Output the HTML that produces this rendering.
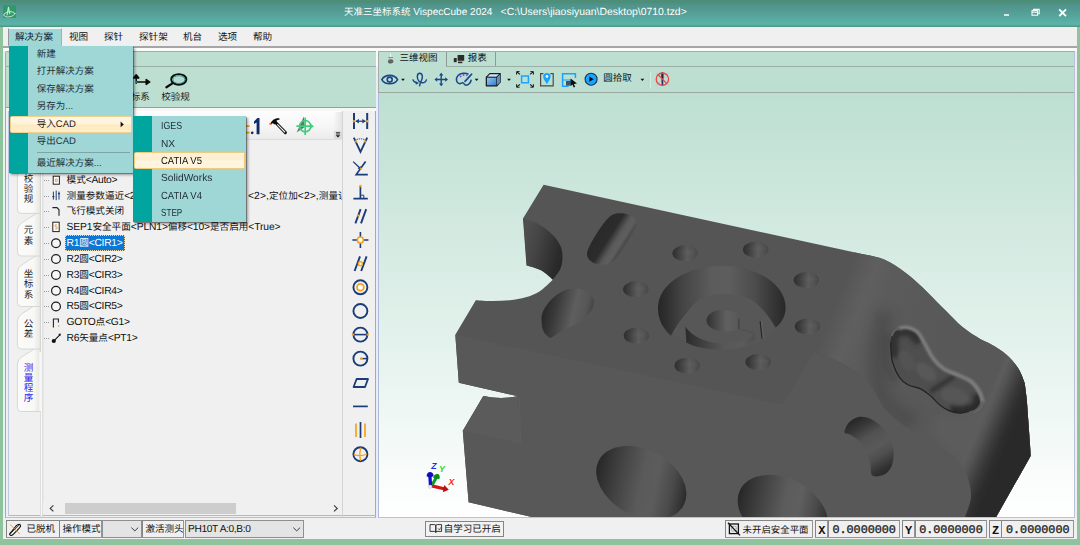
<!DOCTYPE html>
<html lang="zh-CN"><head><meta charset="utf-8"><title>VispecCube 2024</title><style>
html,body{margin:0;padding:0}
html{background:#8fc39d}
body{width:1080px;height:545px;position:relative;overflow:hidden;background:#8fc39d;font-family:"Liberation Sans","Noto Sans CJK SC",sans-serif;font-size:9.5px;color:#000;text-rendering:geometricPrecision}
.a{position:absolute}
.t{white-space:nowrap}
.c{font-size:9.6px;letter-spacing:0}
.v{width:9.6px;font-size:9.6px;text-align:center;white-space:nowrap}
</style></head><body>
<div class="a" style="left:0px;top:0px;width:1080px;height:27px;background:linear-gradient(#4e9272 0,#4b8c7b 5%,#51948b 20%,#55a097 50%,#59afa5 80%,#5cb4a8 90%,#55a78f 94%,#4b957f 100%);"></div><svg class="a" style="left:3px;top:5px" width="14" height="14" viewBox="3 5 14 14"><rect x="3.1" y="5.4" width="12.9" height="12.5" fill="#2e9a67"/><g fill="none" stroke="#e9f7ee" stroke-linecap="round" opacity="0.85"><ellipse cx="9.3" cy="14.3" rx="5.6" ry="2.5" transform="rotate(-9 9.3 14.3)" stroke-width="0.9"/><path d="M7 15 L8.5 7.2 L9.700 13.600" stroke-width="1.100" stroke-linejoin="round"/></g></svg><div class="a t" style="left:344px;top:7px;height:12px;line-height:12px;font-size:10.05px;color:#fff;white-space:pre"><span style="font-size:9.5px">天准三坐标系统</span> VispecCube 2024</div><div class="a t" style="left:500.6px;top:7px;height:12px;line-height:12px;font-size:10.4px;color:#fff;letter-spacing:0.02px;white-space:pre">&lt;C:\Users\jiaosiyuan\Desktop\0710.tzd&gt;</div><svg class="a" style="left:996px;top:4px" width="78" height="18" viewBox="0 0 78 18"><rect x="8" y="10.2" width="5" height="1.6" fill="#f4fbf8"/><g fill="none" stroke="#f4fbf8" stroke-width="1.1"><rect x="36" y="6.6" width="5.6" height="4.6"/><path d="M36 8.2h5.6"/><path d="M37.6 6.4v-1h5.6v4.4h-1.4"/></g><path d="M63.2 5.4 L70 12.2 M70 5.4 L63.2 12.2" stroke="#fff" stroke-width="1.9"/></svg><div class="a" style="left:3px;top:27px;width:1074px;height:512px;background:#f0f0f0;"></div><div class="a" style="left:3px;top:46.4px;width:1074px;height:1.2px;background:#a6a6a6;"></div><div class="a" style="left:3px;top:47.6px;width:1074px;height:3.2px;background:#fbfbfb;"></div><div class="a t" style="left:69px;top:31.5px;height:12px;line-height:12px;font-size:9.6px;color:#111;">视图</div><div class="a t" style="left:104px;top:31.5px;height:12px;line-height:12px;font-size:9.6px;color:#111;">探针</div><div class="a t" style="left:139px;top:31.5px;height:12px;line-height:12px;font-size:9.6px;color:#111;">探针架</div><div class="a t" style="left:183px;top:31.5px;height:12px;line-height:12px;font-size:9.6px;color:#111;">机台</div><div class="a t" style="left:218px;top:31.5px;height:12px;line-height:12px;font-size:9.6px;color:#111;">选项</div><div class="a t" style="left:253px;top:31.5px;height:12px;line-height:12px;font-size:9.6px;color:#111;">帮助</div><div class="a" style="left:3px;top:50.8px;width:2.2px;height:488.2px;background:#e9f1ec;"></div><div class="a" style="left:5.4px;top:51px;width:371px;height:467.4px;border:1px solid #a6aaa8;border-bottom-color:#b4c0e0;border-radius:2px 0 0 0;box-sizing:border-box;background:#f0f0f0;"></div><div class="a" style="left:8.6px;top:514.8px;width:367px;height:1px;background:#b9b9b9;"></div><div class="a" style="left:8px;top:108px;width:1.1px;height:407.6px;background:#bfc8e2;"></div><div class="a" style="left:6.4px;top:52px;width:369.2px;height:55.6px;background:#bddfd2;"></div><div class="a" style="left:6.4px;top:66.2px;width:369.2px;height:1px;background:#9db0a8;"></div><div class="a" style="left:6.4px;top:107px;width:369.2px;height:1.5px;background:#999d9b;"></div><div class="a" style="left:6.4px;top:108.3px;width:369.2px;height:2.8px;background:#f7f7f7;"></div><svg class="a" style="left:118px;top:70px" width="36" height="22" viewBox="118 70 36 22"><path d="M136.2 83.8V75.4M133.6 78 l2.6-3.2 2.6 3.2z M136.2 82h11 M146.2 79.6 l3.6 2.4 -3.6 2.4z" stroke="#0a0a0a" stroke-width="1.5" fill="#0a0a0a" stroke-linejoin="round"/><circle cx="136" cy="82" r="1" fill="#2aa06a"/></svg><div class="a t" style="left:121.2px;top:92.0px;height:12px;line-height:12px;font-size:9.6px;color:#1a1a1a;">坐标系</div><svg class="a" style="left:160px;top:70px" width="34" height="22" viewBox="160 70 34 22"><ellipse cx="178.8" cy="79.4" rx="7.6" ry="5.3" fill="#b2dbd0" stroke="#0c0c0c" stroke-width="1.9"/><ellipse cx="178.8" cy="79.6" rx="6" ry="3.9" fill="none" stroke="#2c8f86" stroke-width="0.9"/><path d="M172.4 83.400 L166.400 87.200" stroke="#0c0c0c" stroke-width="2.300" stroke-linecap="round"/></svg><div class="a t" style="left:161.2px;top:92.0px;height:12px;line-height:12px;font-size:9.6px;color:#1a1a1a;">校验规</div><div class="a" style="left:43px;top:111.3px;width:299.4px;height:28.9px;background:linear-gradient(#fdfdfd 0,#f6f6f6 55%,#ebebeb 100%);border-radius:0 2px 2px 0;border-bottom:1px solid #dcdcdc;box-sizing:border-box;"></div><div class="a" style="left:332.6px;top:111.6px;width:9.8px;height:28.2px;background:linear-gradient(90deg,rgba(235,235,235,0) 0,#e4e4e4 100%);"></div><div class="a" style="left:334px;top:130.6px;width:7.8px;height:8px;background:#d9d9d9;border-radius:1px;"></div><svg class="a" style="left:334px;top:130.6px" width="8" height="8" viewBox="0 0 8 8"><path d="M2 1.6h4M2 3h4" stroke="#222" stroke-width="0.8"/><path d="M1.8 4.2h4.4L4 6.6z" fill="#111"/></svg><svg class="a" style="left:236px;top:112px" width="90" height="28" viewBox="236 112 90 28"><path d="M240 126.2h9.6M244.8 121.6v9M240 132.6h9.6" stroke="#f0a020" stroke-width="1.7"/><circle cx="252.2" cy="132.8" r="1.35" fill="#0e2c69"/><path d="M254 121.6 L257.4 118h2.1v16.2h-2.9v-11.8l-2.6 1.7z" fill="#0e2c69"/><path d="M275.4 122.2 L285.4 132.6" stroke="#0c0c0c" stroke-width="3" stroke-linecap="round"/><path d="M277.6 124.6 L284.8 132" stroke="#f4f4f4" stroke-width="1.1" stroke-linecap="round"/><path d="M270.6 123.6 C271.6 120.4 275.2 117.6 279.6 118.4 L279.4 119.8 C277.2 119.6 275.8 120.8 276.6 122.8 L274.2 124.6 L272.8 123 L271.4 124.6z" fill="#0c0c0c"/><circle cx="270.4" cy="123.8" r="1.1" fill="#ff5a1e"/><path d="M303.8 116.6 L304.8 127 L296.6 132.4z" fill="#6e6e6e"/><g fill="none" stroke="#3fcf7f" stroke-width="1.7"><circle cx="305.2" cy="126.2" r="5.6"/><path d="M305.2 117.6v17.4M296.4 126.2h15"/></g><path d="M310.6 123.8 l3.4 2.4 -3.4 2.4z" fill="#3fcf7f"/></svg><div class="a" style="left:342.4px;top:111.3px;width:1px;height:405.5px;background:#d4d4d4;"></div><svg class="a" style="left:9px;top:160px" width="35" height="360" viewBox="9 160 35 360"><defs><linearGradient id="tg" x1="0" x2="1" y1="0" y2="0"><stop offset="0" stop-color="#fbfbfb"/><stop offset="0.7" stop-color="#f8f8f6"/><stop offset="1" stop-color="#e6e6e2"/></linearGradient></defs><path d="M40.6 160V517" stroke="#dcdcdc" stroke-width="1"/><path d="M41.8 160V517" stroke="#fafafa" stroke-width="1.2"/><path d="M42.8 160V517" stroke="#cfcfcf" stroke-width="0.8"/><path d="M40.4 345 L23 356 Q17.4 359 17.4 364 L17.4 407.5 Q17.4 411.5 21.4 411.5 L40.4 411.5 Z" fill="url(#tg)" stroke="#cfcfcb" stroke-width="0.8"/><path d="M40.4 302 L23 313 Q17.4 316 17.4 321 L17.4 345 Q17.4 349 21.4 349 L40.4 349 Z" fill="url(#tg)" stroke="#cfcfcb" stroke-width="0.8"/><path d="M40.4 253 L23 264 Q17.4 267 17.4 272 L17.4 302.5 Q17.4 306.5 21.4 306.5 L40.4 306.5 Z" fill="url(#tg)" stroke="#cfcfcb" stroke-width="0.8"/><path d="M40.4 211 L23 222 Q17.4 225 17.4 230 L17.4 252 Q17.4 256 21.4 256 L40.4 256 Z" fill="url(#tg)" stroke="#cfcfcb" stroke-width="0.8"/><path d="M40.4 151 L23 162 Q17.4 165 17.4 170 L17.4 209.4 Q17.4 213.4 21.4 213.4 L40.4 213.4 Z" fill="url(#tg)" stroke="#cfcfcb" stroke-width="0.8"/><path d="M40.6 352 V411" stroke="#f6f6f4" stroke-width="2.6"/></svg><div class="a v" style="left:23.8px;top:175.4px;color:#1c1c1c;line-height:9.95px">校<br>验<br>规</div><div class="a v" style="left:23.8px;top:226.4px;color:#1c1c1c;line-height:10.7px">元<br>素</div><div class="a v" style="left:23.8px;top:269.5px;color:#1c1c1c;line-height:10.5px">坐<br>标<br>系</div><div class="a v" style="left:23.8px;top:319.6px;color:#1c1c1c;line-height:10.2px">公<br>差</div><div class="a v" style="left:23.8px;top:363.6px;color:#2a22ee;line-height:10.2px">测<br>量<br>程<br>序</div><div class="a" style="left:43px;top:111.3px;width:299.4px;height:391px;overflow:hidden;"><div class="a" style="left:1.4px;top:68.50000000000001px;width:6px;height:1px;background:repeating-linear-gradient(90deg,#9a9a9a 0 1px,transparent 1px 2px)"></div><div class="a t" style="left:23.6px;top:63.6px;height:12px;line-height:12px;font-size:10.3px;color:#111;letter-spacing:-0.3px;"><span class="c">模式</span>&lt;Auto&gt;</div><div class="a" style="left:1.4px;top:84.39999999999999px;width:6px;height:1px;background:repeating-linear-gradient(90deg,#9a9a9a 0 1px,transparent 1px 2px)"></div><div class="a t" style="left:23.6px;top:79.5px;height:12px;line-height:12px;font-size:10.3px;color:#111;letter-spacing:-0.3px;"><span class="c">测量参数逼近</span>&lt;2&gt;,<span class="c">回退</span>&lt;2&gt;,<span class="c">搜索</span>&lt;2&gt;</div><div class="a" style="left:1.4px;top:99.60000000000001px;width:6px;height:1px;background:repeating-linear-gradient(90deg,#9a9a9a 0 1px,transparent 1px 2px)"></div><div class="a t" style="left:23.6px;top:94.7px;height:12px;line-height:12px;font-size:10.3px;color:#111;letter-spacing:-0.3px;"><span class="c">飞行模式关闭</span></div><div class="a" style="left:1.4px;top:115.50000000000001px;width:6px;height:1px;background:repeating-linear-gradient(90deg,#9a9a9a 0 1px,transparent 1px 2px)"></div><div class="a t" style="left:23.6px;top:110.6px;height:12px;line-height:12px;font-size:10.3px;color:#111;letter-spacing:-0.13px;">SEP1<span class="c">安全平面</span>&lt;PLN1&gt;<span class="c">偏移</span>&lt;10&gt;<span class="c">是否启用</span>&lt;True&gt;</div><div class="a" style="left:1.4px;top:131.8px;width:6px;height:1px;background:repeating-linear-gradient(90deg,#9a9a9a 0 1px,transparent 1px 2px)"></div><div class="a" style="left:21.8px;top:124.20000000000002px;width:60.4px;height:15.6px;background:#0b78d6;outline:1px dotted #e8d9b0;outline-offset:-1px"></div><div class="a t" style="left:23.6px;top:126.9px;height:12px;line-height:12px;font-size:10.3px;color:#fff;letter-spacing:-0.3px;">R1<span class="c">圆</span>&lt;CIR1&gt;</div><div class="a" style="left:1.4px;top:147.3px;width:6px;height:1px;background:repeating-linear-gradient(90deg,#9a9a9a 0 1px,transparent 1px 2px)"></div><div class="a t" style="left:23.6px;top:142.4px;height:12px;line-height:12px;font-size:10.3px;color:#111;letter-spacing:-0.3px;">R2<span class="c">圆</span>&lt;CIR2&gt;</div><div class="a" style="left:1.4px;top:163.8px;width:6px;height:1px;background:repeating-linear-gradient(90deg,#9a9a9a 0 1px,transparent 1px 2px)"></div><div class="a t" style="left:23.6px;top:158.9px;height:12px;line-height:12px;font-size:10.3px;color:#111;letter-spacing:-0.3px;">R3<span class="c">圆</span>&lt;CIR3&gt;</div><div class="a" style="left:1.4px;top:179.8px;width:6px;height:1px;background:repeating-linear-gradient(90deg,#9a9a9a 0 1px,transparent 1px 2px)"></div><div class="a t" style="left:23.6px;top:174.9px;height:12px;line-height:12px;font-size:10.3px;color:#111;letter-spacing:-0.3px;">R4<span class="c">圆</span>&lt;CIR4&gt;</div><div class="a" style="left:1.4px;top:195.0px;width:6px;height:1px;background:repeating-linear-gradient(90deg,#9a9a9a 0 1px,transparent 1px 2px)"></div><div class="a t" style="left:23.6px;top:190.1px;height:12px;line-height:12px;font-size:10.3px;color:#111;letter-spacing:-0.3px;">R5<span class="c">圆</span>&lt;CIR5&gt;</div><div class="a" style="left:1.4px;top:211.09999999999997px;width:6px;height:1px;background:repeating-linear-gradient(90deg,#9a9a9a 0 1px,transparent 1px 2px)"></div><div class="a t" style="left:23.6px;top:206.2px;height:12px;line-height:12px;font-size:10.3px;color:#111;letter-spacing:-0.3px;">GOTO<span class="c">点</span>&lt;G1&gt;</div><div class="a" style="left:1.4px;top:227.09999999999997px;width:6px;height:1px;background:repeating-linear-gradient(90deg,#9a9a9a 0 1px,transparent 1px 2px)"></div><div class="a t" style="left:23.6px;top:222.2px;height:12px;line-height:12px;font-size:10.3px;color:#111;letter-spacing:-0.3px;">R6<span class="c">矢量点</span>&lt;PT1&gt;</div><div class="a t" style="left:205px;top:79.5px;height:12px;line-height:12px;font-size:10.3px;color:#111;letter-spacing:0.1px;">&lt;2&gt;,<span class="c">定位加</span>&lt;2&gt;,<span class="c">测量误差</span>&lt;0.5&gt;</div></div><svg class="a" style="left:48px;top:170px" width="16" height="180" viewBox="48 170 16 180"><rect x="53.200" y="176.200" width="6.200" height="8" fill="#fff" stroke="#222" stroke-width="1"/><path d="M55.400 179h1.800v2.600h-1.800z" fill="none" stroke="#e8902a" stroke-width="0.800"/><g stroke="#1d3c74" stroke-width="1"><path d="M53.4 191.6v8M56.2 190.6v9.6M59 191.6v8"/><path d="M52.4 196.6h2M58 193.6h2" stroke-width="1.4"/></g><path d="M52.4 207.6h4.6l2 2.2v6" fill="none" stroke="#222" stroke-width="1.1"/><rect x="52.8" y="222.2" width="6.4" height="9.4" fill="#fff" stroke="#222" stroke-width="1"/><path d="M57 224.8h-1.8v2h1.8v2.2h-2" fill="none" stroke="#e8902a" stroke-width="0.8"/><circle cx="56" cy="243.2" r="4.4" fill="#f6f6f6" stroke="#1a1a1a" stroke-width="1.2"/><circle cx="56" cy="259" r="4.4" fill="#f6f6f6" stroke="#1a1a1a" stroke-width="1.2"/><circle cx="56" cy="274.9" r="4.4" fill="#f6f6f6" stroke="#1a1a1a" stroke-width="1.2"/><circle cx="56" cy="290.8" r="4.4" fill="#f6f6f6" stroke="#1a1a1a" stroke-width="1.2"/><circle cx="56" cy="306.5" r="4.4" fill="#f6f6f6" stroke="#1a1a1a" stroke-width="1.2"/><path d="M53.4 327.4v-8.4h5v3.4" fill="none" stroke="#222" stroke-width="1.1"/><circle cx="58.8" cy="326" r="0.7" fill="#e8902a"/><circle cx="53.8" cy="341" r="2.1" fill="#111"/><path d="M54.6 340.2l5.2-5.4" stroke="#111" stroke-width="1.1"/><path d="M60.8 333.6l-0.4 2.6-2.2-2.2z" fill="#111"/></svg><div class="a" style="left:43px;top:502.4px;width:299.4px;height:12px;background:#f0f0f0;"></div><div class="a" style="left:65px;top:502.6px;width:171.2px;height:11.6px;background:#cdcdcd;"></div><svg class="a" style="left:43px;top:502px" width="300" height="13" viewBox="43 502 300 13"><path d="M53.4 505.4l-3.2 3 3.2 3" fill="none" stroke="#3c3c3c" stroke-width="1.2"/><path d="M334 505.400l3.200 3 -3.200 3" fill="none" stroke="#3c3c3c" stroke-width="1.2"/></svg><svg class="a" style="left:344px;top:108px" width="32" height="360" viewBox="344 108 32 360" fill="none" stroke-linecap="butt"><g stroke="#1b3c78" stroke-width="2"><path d="M354 113v16M367.2 113v16"/><path d="M355.6 121.2h10" stroke-width="1.2"/></g><path d="M358.8 118.8l-3 2.4 3 2.4zM362.4 118.8l3 2.4-3 2.4z" fill="#1b3c78"/><circle cx="354" cy="121.2" r="1.2" fill="#f5a31c"/><circle cx="367.2" cy="121.2" r="1.2" fill="#f5a31c"/><path d="M353.8 137.6l6.7 14.2 6.7-14.2" stroke="#1b3c78" stroke-width="1.9"/><path d="M356.6 139.6q3.9-1.6 7.8 0" stroke="#1b3c78" stroke-width="1" stroke-dasharray="1.4 0.8"/><circle cx="356" cy="141.4" r="1.2" fill="#f5a31c"/><circle cx="365" cy="141.4" r="1.2" fill="#f5a31c"/><g stroke="#1b3c78" stroke-width="1.7"><path d="M365.6 161.4l-9.4 13.2h11.6"/><path d="M353.2 161.6l6.6 6.4" stroke-width="1.3"/></g><path d="M361.2 169.6l-0.6-3.6-3 2.8z" fill="#1b3c78"/><circle cx="360.8" cy="168.6" r="1.1" fill="#f5a31c"/><g stroke="#1b3c78" stroke-width="1.7"><path d="M360.4 186v12.4M353.4 198.6h14.4"/><path d="M361.2 195.2h2.6v3" stroke-width="1"/></g><circle cx="360.4" cy="186" r="1.2" fill="#f5a31c"/><g stroke="#1b3c78" stroke-width="1.9"><path d="M360.6 209.2l-5.2 14.2M366.2 209.2l-5.2 14.2"/></g><circle cx="358.4" cy="215.6" r="1.2" fill="#f5a31c"/><path d="M360.4 232v16M352.4 240h16" stroke="#1b3c78" stroke-width="1.6"/><circle cx="360.4" cy="240" r="3" fill="#fff" stroke="#f5a31c" stroke-width="1.7"/><g stroke="#1b3c78" stroke-width="1.9"><path d="M360 256.4l-5.4 14.6M366.6 256.4l-5.4 14.6"/></g><circle cx="360.4" cy="263.8" r="2" fill="#fff" stroke="#f5a31c" stroke-width="1.4"/><circle cx="360.4" cy="287.3" r="7" stroke="#1b3c78" stroke-width="1.9"/><circle cx="360.4" cy="287.3" r="3.4" fill="#fff" stroke="#f5a31c" stroke-width="1.8"/><circle cx="360.4" cy="311" r="7" stroke="#1b3c78" stroke-width="1.9"/><circle cx="360.4" cy="334.6" r="7" stroke="#1b3c78" stroke-width="1.9"/><path d="M353.4 334.6h14" stroke="#1b3c78" stroke-width="1.6"/><circle cx="353" cy="334.6" r="1.2" fill="#f5a31c"/><circle cx="367.8" cy="334.6" r="1.2" fill="#f5a31c"/><circle cx="360.4" cy="358.6" r="7" stroke="#1b3c78" stroke-width="1.9"/><path d="M360.4 358.6h7" stroke="#1b3c78" stroke-width="1.5"/><circle cx="361.6" cy="358.6" r="1.2" fill="#f5a31c"/><path d="M356.6 379h11.4l-3 8h-11.4z" stroke="#1b3c78" stroke-width="1.8" stroke-linejoin="round"/><path d="M353 406.4h14.8" stroke="#1b3c78" stroke-width="1.7"/><path d="M356 423.6v13.4M365 423.6v13.4" stroke="#f5a31c" stroke-width="1.7"/><path d="M360.5 422v16" stroke="#1b3c78" stroke-width="1.7"/><circle cx="360.4" cy="454.2" r="7" stroke="#1b3c78" stroke-width="1.9"/><path d="M353.8 454.6q6.6 2.4 13.2-0.6M360.8 447.6q-2 6.6-0.2 13.2" stroke="#f5a31c" stroke-width="1.2"/></svg><div class="a" style="left:376.4px;top:51px;width:2px;height:466.6px;background:linear-gradient(#fafafa 0,#fafafa 15px,#e9edf6 16px,#e9edf6 100%);"></div><div class="a" style="left:378.2px;top:51px;width:697.2px;height:467.2px;border:1px solid #a6aaa8;border-bottom-color:#b8c2dc;border-right-color:#b8c0da;box-sizing:border-box;background:#bddfd2;"></div><div class="a" style="left:378.2px;top:93px;width:1px;height:424.6px;background:#aeb9de;"></div><div class="a" style="left:446.4px;top:52px;width:1px;height:15px;background:#8f9a96;"></div><div class="a" style="left:495.4px;top:52px;width:1px;height:15px;background:#8f9a96;"></div><div class="a" style="left:446.4px;top:66.2px;width:628px;height:1px;background:#9db0a8;"></div><div class="a" style="left:379.2px;top:91.5px;width:695.2px;height:1px;background:#9aa8a2;"></div><div class="a" style="left:379.2px;top:92.5px;width:695.2px;height:0.8px;background:#dfeee8;"></div><svg class="a" style="left:385px;top:52px" width="12" height="14" viewBox="385 52 12 14"><path d="M390.6 53.6v3.6" stroke="#f3f3f3" stroke-width="1"/><path d="M388.6 57.6h4.2" stroke="#555" stroke-width="1" stroke-dasharray="1.2 0.6"/><ellipse cx="390.7" cy="61.4" rx="2.7" ry="2.1" fill="#5a5a5a"/><path d="M388.4 60l4.6 2.6" stroke="#8a8a8a" stroke-width="0.6"/></svg><div class="a t" style="left:399.4px;top:53.4px;height:12px;line-height:12px;font-size:9.5px;color:#111;">三维视图</div><svg class="a" style="left:452px;top:53px" width="14" height="12" viewBox="452 53 14 12"><rect x="457.6" y="55" width="6.6" height="5.8" fill="#2b2b2b"/><rect x="453.8" y="58" width="2.9" height="4.2" fill="#2b2b2b"/><rect x="458" y="61.6" width="4.4" height="1.6" fill="#2b2b2b"/></svg><div class="a t" style="left:467.8px;top:53.4px;height:12px;line-height:12px;font-size:9.5px;color:#111;">报表</div><svg class="a" style="left:379px;top:68px" width="300" height="23" viewBox="379 68 300 23" fill="none"><path d="M381.8 79.6C385 74 394.4 74 397.6 79.6C394.400 85.200 385 85.200 381.800 79.600z" stroke="#1a4788" stroke-width="1.6"/><circle cx="389.7" cy="79.6" r="2.5" stroke="#1a4788" stroke-width="1.6"/><path d="M401.1 78.69999999999999h3.8l-1.9 2.2z" fill="#111"/><path d="M419.4 86.4 C419.8 82.4 422.6 80 422.4 76.8 C422.2 74.4 420.9 73.3 419.8 73.3 C418.4 73.3 417.3 74.600 417.3 76.800 C417.3 80 419.6 82.700 422.400 82.800 C424.400 82.800 426 81.600 426.600 79.400" stroke="#1a4788" stroke-width="1.4"/><path d="M412.800 79.400 C413.400 81.400 415 82.600 417 82.900" stroke="#1a4788" stroke-width="1.400"/><path d="M415.600 81.200l3.400 1.800-3.200 1.800z" fill="#1a4788"/><path d="M441.2 74.6v9.8M436.2 79.5h10" stroke="#1a4788" stroke-width="1.4"/><path d="M441.2 72.8l2.2 2.8h-4.4zM441.2 86.2l2.2-2.8h-4.4zM434.4 79.5l2.8-2.2v4.4zM448 79.5l-2.8-2.2v4.4z" fill="#1a4788"/><path d="M468.6 74.4 C465.6 72.6 460.6 72.8 458 75.6 C455.4 78.6 456.2 82.8 459.2 83.6 C461 84 461.6 82.6 462.8 82.8 C464.2 83 464.2 85.4 466.2 85.2 C469 84.8 471 82 471.2 79.6" stroke="#1a4788" stroke-width="1.5"/><path d="M471.6 74.2l-6.6 7.2" stroke="#1a4788" stroke-width="1.7" stroke-linecap="round"/><circle cx="460.6" cy="76.4" r="0.9" fill="#8a3cf0"/><circle cx="463.6" cy="75" r="0.9" fill="#8a3cf0"/><circle cx="466.8" cy="75.4" r="0.8" fill="#8a3cf0"/><path d="M474.70000000000005 78.69999999999999h3.8l-1.9 2.2z" fill="#111"/><defs><linearGradient id="cb" x1="0" x2="1" y1="0" y2="1"><stop offset="0" stop-color="#9fcbf0"/><stop offset="1" stop-color="#2f78c8"/></linearGradient></defs><path d="M486.4 77.2l3.4-3.6h10.4v8.6l-3.4 3.6h-10.4z" fill="#cfe6f8" stroke="#1c1c22" stroke-width="1.1" stroke-linejoin="round"/><rect x="486.4" y="77.2" width="10.4" height="8.6" fill="url(#cb)" stroke="#1c1c22" stroke-width="1.1"/><path d="M496.8 77.2l3.4-3.6" stroke="#1c1c22" stroke-width="1.1"/><path d="M497.4 77.6l2.6-2.8v7.2l-2.6 2.8z" fill="#4f8fd6"/><path d="M507.1 78.69999999999999h3.8l-1.9 2.2z" fill="#111"/><rect x="521.6" y="76" width="6.8" height="6.8" stroke="#19a4ff" stroke-width="1.5"/><g stroke="#1c1c22" stroke-width="1.1"><path d="M520 74.4l-3-2.4M530 74.4l3-2.4M520 84.4l-3 2.4M530 84.4l3 2.4"/><path d="M516.6 74.6v-3h3M533.4 74.6v-3h-3M516.6 84.2v3h3M533.4 84.2v3h-3" stroke-width="1"/></g><path d="M543.4 73.6h-2.8v12.2h12.6v-12.2h-2.8" stroke="#4a4a4a" stroke-width="1.2"/><path d="M546.9 84.2 C544.8 80.8 543.2 79 543.2 76.6 a3.7 3.7 0 0 1 7.4 0 C550.6 79 549 80.8 546.9 84.2z" fill="#19a4ff"/><circle cx="546.9" cy="76.4" r="1.3" fill="#fff"/><path d="M575.4 78v-4.2h-12.8v12.4h6" stroke="#19a4ff" stroke-width="1.5"/><path d="M563 80h7.4v5.6" stroke="#19a4ff" stroke-width="1.1"/><rect x="566" y="81" width="4.4" height="4.6" fill="#3a3a3a" opacity="0.85"/><path d="M570.6 78.6l6.4 4.8-3.2 0.6 1.4 2.8-1.4 0.6-1.4-2.8-1.8 1.6z" fill="#0a0a0a"/><circle cx="591.1" cy="79.2" r="6" fill="#19a4ff" stroke="#18324e" stroke-width="1.1"/><path d="M589.4 76.6l4.4 2.6-4.4 2.6z" fill="#0a0a14"/><path d="M640.5 78.69999999999999h3.8l-1.9 2.2z" fill="#111"/><path d="M650 72v16.4" stroke="#f3f8f6" stroke-width="1"/><path d="M649.2 72v16.4" stroke="#a9c4ba" stroke-width="0.6"/><path d="M656.4 73l12 12.4M668.4 73l-12 12.4" stroke="#a8c0b8" stroke-width="0.7"/><path d="M662.4 72.6v13.2" stroke="#1c2f6a" stroke-width="1.7"/><path d="M662.4 72.6v6" stroke="#24243a" stroke-width="2"/><circle cx="662.4" cy="79.2" r="6.2" stroke="#ef4444" stroke-width="1.3"/><path d="M658.2 74.8l8.6 8.8" stroke="#ef4444" stroke-width="1.3"/></svg><div class="a t" style="left:603.2px;top:73.3px;height:12px;line-height:12px;font-size:9.5px;color:#111;">圆拾取</div><svg class="a" style="left:379.2px;top:93.3px" width="695.2" height="424.1" viewBox="379.2 93.3 695.2 424.1"><defs><linearGradient id="bg" x1="0" x2="0" y1="0" y2="1"><stop offset="0" stop-color="#bddfd2"/><stop offset="1" stop-color="#ffffff"/></linearGradient><linearGradient id="hs" x1="0" x2="1" y1="0" y2="0"><stop offset="0" stop-color="#2e2e2e"/><stop offset="0.25" stop-color="#424242"/><stop offset="0.58" stop-color="#5f5f5f"/><stop offset="0.82" stop-color="#555"/><stop offset="1" stop-color="#484848"/></linearGradient><linearGradient id="hsv" x1="0" x2="0" y1="0" y2="1"><stop offset="0" stop-color="#000" stop-opacity="0.1"/><stop offset="0.45" stop-color="#000" stop-opacity="0"/><stop offset="1" stop-color="#555" stop-opacity="0.15"/></linearGradient><linearGradient id="nw" gradientUnits="userSpaceOnUse" x1="523" y1="246" x2="564" y2="256"><stop offset="0" stop-color="#4e4e4e"/><stop offset="0.3" stop-color="#454545"/><stop offset="0.62" stop-color="#363636"/><stop offset="0.85" stop-color="#2b2b2b"/><stop offset="1" stop-color="#272727"/></linearGradient><linearGradient id="sl" gradientUnits="userSpaceOnUse" x1="600" y1="233" x2="622" y2="247"><stop offset="0" stop-color="#2a2a2a"/><stop offset="0.4" stop-color="#2c2c2c"/><stop offset="0.52" stop-color="#404040"/><stop offset="0.68" stop-color="#595959"/><stop offset="0.86" stop-color="#5f5f5f"/><stop offset="0.95" stop-color="#575757"/><stop offset="1" stop-color="#4c4c4c"/></linearGradient><linearGradient id="ah" gradientUnits="userSpaceOnUse" x1="543" y1="306" x2="594" y2="318"><stop offset="0" stop-color="#262626"/><stop offset="0.25" stop-color="#3a3a3a"/><stop offset="0.6" stop-color="#5e5e5e"/><stop offset="0.82" stop-color="#565656"/><stop offset="1" stop-color="#3e3e3e"/></linearGradient><linearGradient id="pw" gradientUnits="userSpaceOnUse" x1="658" y1="0" x2="786" y2="0"><stop offset="0" stop-color="#262626"/><stop offset="0.07" stop-color="#303030"/><stop offset="0.2" stop-color="#454545"/><stop offset="0.42" stop-color="#5c5c5c"/><stop offset="0.56" stop-color="#5d5d5d"/><stop offset="0.76" stop-color="#4c4c4c"/><stop offset="0.9" stop-color="#363636"/><stop offset="1" stop-color="#282828"/></linearGradient><linearGradient id="bw" gradientUnits="userSpaceOnUse" x1="685" y1="0" x2="757" y2="0"><stop offset="0" stop-color="#2a2a2a"/><stop offset="0.2" stop-color="#3c3c3c"/><stop offset="0.55" stop-color="#585858"/><stop offset="0.8" stop-color="#5b5b5b"/><stop offset="1" stop-color="#4e4e4e"/></linearGradient><linearGradient id="chh" gradientUnits="userSpaceOnUse" x1="706" y1="0" x2="740" y2="0"><stop offset="0" stop-color="#303030"/><stop offset="0.3" stop-color="#484848"/><stop offset="0.62" stop-color="#606060"/><stop offset="0.9" stop-color="#5a5a5a"/><stop offset="1" stop-color="#505050"/></linearGradient><linearGradient id="fh" gradientUnits="userSpaceOnUse" x1="597.3" y1="495.9" x2="685.7" y2="470.1"><stop offset="0" stop-color="#282828"/><stop offset="0.1" stop-color="#333"/><stop offset="0.28" stop-color="#464646"/><stop offset="0.5" stop-color="#5a5a5a"/><stop offset="0.66" stop-color="#5c5c5c"/><stop offset="0.84" stop-color="#4a4a4a"/><stop offset="0.95" stop-color="#363636"/><stop offset="1" stop-color="#2c2c2c"/></linearGradient><linearGradient id="fh2" gradientUnits="userSpaceOnUse" x1="738.8" y1="524.9" x2="827.2" y2="499.1"><stop offset="0" stop-color="#282828"/><stop offset="0.1" stop-color="#333"/><stop offset="0.28" stop-color="#464646"/><stop offset="0.5" stop-color="#5c5c5c"/><stop offset="0.66" stop-color="#5f5f5f"/><stop offset="0.84" stop-color="#4a4a4a"/><stop offset="0.95" stop-color="#363636"/><stop offset="1" stop-color="#2c2c2c"/></linearGradient><linearGradient id="rf" gradientUnits="userSpaceOnUse" x1="992" y1="385.1" x2="1027" y2="400"><stop offset="0" stop-color="#5e5e5e" stop-opacity="0"/><stop offset="0.14" stop-color="#5c5c5c" stop-opacity="1"/><stop offset="0.3" stop-color="#535353" stop-opacity="1"/><stop offset="0.48" stop-color="#444444" stop-opacity="1"/><stop offset="0.66" stop-color="#363636" stop-opacity="1"/><stop offset="0.82" stop-color="#2d2d2d" stop-opacity="1"/><stop offset="1" stop-color="#292929" stop-opacity="1"/></linearGradient><linearGradient id="rc" gradientUnits="userSpaceOnUse" x1="857" y1="250.4" x2="986.9" y2="302.6"><stop offset="0" stop-color="#555555"/><stop offset="0.08" stop-color="#5a5a5a"/><stop offset="0.17" stop-color="#5f5f5f"/><stop offset="0.32" stop-color="#5b5b5b"/><stop offset="0.6" stop-color="#595959"/><stop offset="1" stop-color="#585858"/></linearGradient><filter id="b5" filterUnits="userSpaceOnUse" x="379" y="93" width="696" height="425"><feGaussianBlur stdDeviation="5"/></filter><filter id="b3" filterUnits="userSpaceOnUse" x="379" y="93" width="696" height="425"><feGaussianBlur stdDeviation="3"/></filter><filter id="b15" filterUnits="userSpaceOnUse" x="379" y="93" width="696" height="425"><feGaussianBlur stdDeviation="1.5"/></filter><filter id="b2" filterUnits="userSpaceOnUse" x="379" y="93" width="696" height="425"><feGaussianBlur stdDeviation="2"/></filter><filter id="b1" filterUnits="userSpaceOnUse" x="379" y="93" width="696" height="425"><feGaussianBlur stdDeviation="1"/></filter><filter id="b07" filterUnits="userSpaceOnUse" x="379" y="93" width="696" height="425"><feGaussianBlur stdDeviation="0.7"/></filter><linearGradient id="ch" gradientUnits="userSpaceOnUse" x1="852" y1="420" x2="886" y2="476"><stop offset="0" stop-color="#262626"/><stop offset="0.15" stop-color="#363636"/><stop offset="0.35" stop-color="#525252"/><stop offset="0.55" stop-color="#595959"/><stop offset="0.7" stop-color="#4e4e4e"/><stop offset="0.88" stop-color="#333"/><stop offset="1" stop-color="#272727"/></linearGradient><clipPath id="vp"><rect x="379.2" y="93.3" width="695.2" height="424.1"/></clipPath><clipPath id="sil"><path d="M543.8 185 L860 253.8C864.2 254.8 877.5 256.9 885.0 260.0C892.5 263.1 898.8 268.0 905.0 272.5C911.2 277.0 917.2 282.6 922.0 287.0C926.8 291.4 930.0 295.0 934.0 299.0C938.0 303.0 941.2 306.2 946.0 311.0C950.8 315.8 957.3 322.9 963.0 327.6C968.7 332.3 975.2 336.1 980.0 339.0C984.8 341.9 987.5 342.3 992.0 345.0C996.5 347.7 1002.2 350.9 1006.7 355.0C1011.2 359.1 1016.0 364.7 1019.0 369.5C1022.0 374.3 1024.0 381.3 1025.0 383.7L1027 400 L1031 456 L996 518 L535 518 L468.8 502.6 L463 431 L483.5 396.4 Q500.8 400 518 396.6 L459 383 L455.5 335 L476 300.5C478.8 300.6 487.3 301.4 493.0 301.4C498.7 301.4 504.5 301.2 510.0 300.6C515.5 300.0 521.0 299.1 526.0 297.6C531.0 296.1 535.5 294.4 540.0 291.5C544.5 288.6 550.8 281.9 553.0 280.0C551.0 278.4 545.4 273.0 541.0 270.6C536.6 268.2 529.1 266.6 526.7 265.8L523.2 218.8 Z"/></clipPath></defs><rect x="379.2" y="93.3" width="695.2" height="424.1" fill="url(#bg)"/><g clip-path="url(#vp)"><path d="M543.8 185 L860 253.8C864.2 254.8 877.5 256.9 885.0 260.0C892.5 263.1 898.8 268.0 905.0 272.5C911.2 277.0 917.2 282.6 922.0 287.0C926.8 291.4 930.0 295.0 934.0 299.0C938.0 303.0 941.2 306.2 946.0 311.0C950.8 315.8 957.3 322.9 963.0 327.6C968.7 332.3 975.2 336.1 980.0 339.0C984.8 341.9 987.5 342.3 992.0 345.0C996.5 347.7 1002.2 350.9 1006.7 355.0C1011.2 359.1 1016.0 364.7 1019.0 369.5C1022.0 374.3 1024.0 381.3 1025.0 383.7L1027 400 L1031 456 L996 518 L535 518 L468.8 502.6 L463 431 L483.5 396.4 Q500.8 400 518 396.6 L459 383 L455.5 335 L476 300.5C478.8 300.6 487.3 301.4 493.0 301.4C498.7 301.4 504.5 301.2 510.0 300.6C515.5 300.0 521.0 299.1 526.0 297.6C531.0 296.1 535.5 294.4 540.0 291.5C544.5 288.6 550.8 281.9 553.0 280.0C551.0 278.4 545.4 273.0 541.0 270.6C536.6 268.2 529.1 266.6 526.7 265.8L523.2 218.8 Z" fill="#555555"/><g clip-path="url(#sil)"><path d="M523.2 218.8C525.5 219.6 532.5 221.3 537.0 223.6C541.5 225.9 546.3 229.3 550.0 232.5C553.7 235.7 556.9 239.4 559.0 243.0C561.1 246.6 562.3 249.8 562.6 254.0C562.9 258.2 562.6 263.7 561.0 268.0C559.4 272.3 554.3 278.0 553.0 280.0C551.0 278.4 545.4 273.0 541.0 270.6C536.6 268.2 529.1 266.6 526.7 265.8Z" fill="url(#nw)"/><path d="M864 232 L812 351 L814 352.6 C817.8 354.0 829.7 357.3 837.0 360.8C844.3 364.3 851.6 368.9 857.6 373.6C863.6 378.3 868.6 383.3 873.0 389.0C877.4 394.7 879.0 402.0 884.0 408.0C889.0 414.0 896.3 420.1 903.0 425.0C909.7 429.9 918.1 434.0 924.4 437.7C930.7 441.4 935.8 443.6 941.0 447.2C946.2 450.8 951.4 455.0 955.4 459.0C959.4 463.0 962.6 466.6 965.0 471.0C967.4 475.4 969.0 480.6 970.0 485.4C971.0 490.2 971.7 494.3 970.9 499.7C970.1 505.1 966.0 515.0 965.0 518.0 L1040 518 L1040 232 Z" fill="url(#rc)"/><path d="M886.0 312.0C885.0 316.3 881.5 329.7 880.0 338.0C878.5 346.3 877.0 353.3 877.0 362.0C877.0 370.7 877.2 382.0 880.0 390.0C882.8 398.0 888.3 404.5 894.0 410.0C899.7 415.5 910.7 420.8 914.0 423.0" fill="none" stroke="#484848" stroke-width="18" opacity="0.6" filter="url(#b5)"/><path d="M931 430 L938 414 L958 416 L977 408 L1000 394 L1027 386 L1040 390 L1040 518 L964 518 L970.9 499.7 L970 485.4 L965 471 L955.4 459 L941 447.2 Z" fill="#5c5c5c" filter="url(#b3)"/><path d="M1006 352 L992 385.1 L935.4 517.6 L1040 517.6 L1040 352 Z" fill="url(#rf)"/><path d="M455.5 335 L782.5 405 L814 352.6 C817.8 354.0 829.7 357.3 837.0 360.8C844.3 364.3 851.6 368.9 857.6 373.6C863.6 378.3 868.6 383.3 873.0 389.0C877.4 394.7 879.0 402.0 884.0 408.0C889.0 414.0 896.3 420.1 903.0 425.0C909.7 429.9 918.1 434.0 924.4 437.7C930.7 441.4 935.8 443.6 941.0 447.2C946.2 450.8 951.4 455.0 955.4 459.0C959.4 463.0 962.6 466.6 965.0 471.0C967.4 475.4 969.0 480.6 970.0 485.4C971.0 490.2 971.7 494.3 970.9 499.7C970.1 505.1 966.0 515.0 965.0 518.0 L440 530 Z" fill="#585858"/><path d="M483.5 396.4 Q500.8 400 518 396.6 L520.6 443.6 L463 431 Z" fill="#5b5b5b"/><path d="M519.4 397 L521 444" stroke="#606060" stroke-width="0.8" fill="none"/><ellipse cx="685.3" cy="253.6" rx="12.7" ry="8" fill="url(#hs)"/><ellipse cx="685.3" cy="253.6" rx="12.7" ry="8" fill="url(#hsv)"/><ellipse cx="755.9" cy="250" rx="12.7" ry="8" fill="url(#hs)"/><ellipse cx="755.9" cy="250" rx="12.7" ry="8" fill="url(#hsv)"/><ellipse cx="806.6" cy="280.4" rx="12.7" ry="8" fill="url(#hs)"/><ellipse cx="806.6" cy="280.4" rx="12.7" ry="8" fill="url(#hsv)"/><ellipse cx="807.7" cy="326.9" rx="12.7" ry="8" fill="url(#hs)"/><ellipse cx="807.7" cy="326.9" rx="12.7" ry="8" fill="url(#hsv)"/><ellipse cx="758.4" cy="362.4" rx="12.7" ry="8" fill="url(#hs)"/><ellipse cx="758.4" cy="362.4" rx="12.7" ry="8" fill="url(#hsv)"/><ellipse cx="687.5" cy="366" rx="12.7" ry="8" fill="url(#hs)"/><ellipse cx="687.5" cy="366" rx="12.7" ry="8" fill="url(#hsv)"/><ellipse cx="636.6" cy="336" rx="12.7" ry="8" fill="url(#hs)"/><ellipse cx="636.6" cy="336" rx="12.7" ry="8" fill="url(#hsv)"/><ellipse cx="636" cy="289.6" rx="12.7" ry="8" fill="url(#hs)"/><ellipse cx="636" cy="289.6" rx="12.7" ry="8" fill="url(#hsv)"/><path d="M611.0 216.0C614.7 213.4 618.5 213.5 622.0 213.6C625.5 213.7 629.6 214.9 632.0 216.6C634.4 218.3 636.2 221.3 636.4 224.0C636.6 226.7 635.4 228.5 633.0 233.0C630.6 237.5 625.4 246.2 622.0 251.0C618.6 255.8 615.9 259.7 612.6 262.0C609.3 264.3 605.3 264.9 602.0 265.0C598.7 265.1 595.0 264.1 592.6 262.6C590.2 261.1 587.9 258.6 587.4 256.0C586.9 253.4 587.3 251.5 589.4 247.0C591.5 242.5 596.4 234.2 600.0 229.0C603.6 223.8 607.3 218.6 611.0 216.0Z" fill="url(#sl)"/><path d="M541.7 318.0C541.8 314.9 542.7 313.2 543.6 311.0C544.5 308.8 545.8 306.9 547.2 305.0C548.6 303.1 550.4 301.0 552.0 299.4C553.6 297.8 555.0 296.7 556.8 295.4C558.6 294.1 560.9 292.6 563.0 291.6C565.1 290.6 567.0 289.9 569.2 289.4C571.4 288.9 573.9 288.7 576.0 288.8C578.1 288.9 579.8 289.3 581.6 289.8C583.4 290.3 585.4 291.1 587.0 292.0C588.6 292.9 590.0 294.2 591.2 295.5C592.4 296.8 593.5 298.5 594.0 300.0C594.5 301.5 594.2 303.1 594.0 304.6C593.8 306.1 593.3 307.5 592.6 309.0C591.9 310.5 591.1 311.8 589.8 313.4C588.5 315.0 586.4 317.0 584.6 318.6C582.8 320.2 580.9 321.7 578.8 323.0C576.7 324.3 574.3 325.5 572.0 326.6C569.7 327.8 567.3 328.7 565.0 329.9C562.7 331.1 560.3 332.2 558.0 333.6C555.7 335.0 553.1 337.7 551.3 338.1C549.5 338.5 548.6 337.4 547.2 336.0C545.8 334.6 543.9 332.9 543.0 329.9C542.1 326.9 541.6 321.1 541.7 318.0Z" fill="url(#ah)"/><ellipse cx="722" cy="308" rx="63.8" ry="42" fill="#575757"/><path d="M671.2 336 C662 328 658 318 658.2 308 A63.8 42 0 0 1 785.8 308 C785.8 316 782 323 776 328 C774.3 325.5 769.6 317.6 765.6 313.0C761.6 308.4 756.3 303.2 752.0 300.4C747.7 297.6 744.2 297.0 740.0 296.0C735.8 295.0 731.7 294.5 727.0 294.4C722.3 294.3 716.8 294.3 712.0 295.4C707.2 296.5 702.4 297.8 698.0 301.0C693.6 304.2 689.1 310.5 685.6 314.7C682.1 318.9 679.4 322.4 677.0 326.0C674.6 329.6 672.2 334.3 671.2 336.0 Z" fill="url(#pw)"/><path d="M685.6 326.7 C690 334 704 343.6 723.2 343.6 C738 343.6 750 339 755 333 L755.6 339.8 C745 348 732 350 722.5 350 C708 350 694 347 686.6 342.7 Z" fill="url(#bw)"/><path d="M739.6 329.4 L755 333.2" stroke="#4c4c4c" stroke-width="0.7"/><path d="M760.4 321.5 L762.2 338.8" stroke="#262626" stroke-width="1.2"/><path d="M761.8 321.5 L763.6 338.6" stroke="#6a6a6a" stroke-width="0.7"/><path d="M706.8 321 A16.4 10.6 0 0 1 739.4 319 L739.4 329.2 C735 331.4 729 331.6 723.2 331.4 C714 331 707 327 706.8 321 Z" fill="url(#chh)"/><path d="M739.2 319 L739.2 329.4" stroke="#3c3c3c" stroke-width="0.9"/><ellipse cx="641.5" cy="483" rx="48" ry="33" transform="rotate(28 641.5 483)" fill="url(#fh)"/><ellipse cx="783" cy="512" rx="48" ry="33" transform="rotate(28 783 512)" fill="url(#fh2)"/><path d="M844.7 432.9C844.4 430.9 846.8 425.6 849.0 423.0C851.2 420.4 855.1 418.4 857.9 417.5C860.7 416.6 863.3 417.0 866.0 417.6C868.7 418.2 871.3 419.4 874.0 421.0C876.7 422.6 879.8 424.8 882.0 427.0C884.2 429.2 885.6 431.6 887.3 434.4C889.0 437.2 890.9 440.8 892.0 444.0C893.1 447.2 893.9 449.7 893.9 453.5C893.9 457.3 893.3 463.1 891.7 466.7C890.1 470.2 887.5 473.3 884.3 474.8C881.1 476.3 874.9 477.7 872.6 475.8C870.3 473.9 871.4 467.7 870.4 463.7C869.4 459.7 868.5 455.7 866.7 452.0C864.9 448.3 862.1 444.5 859.4 441.7C856.7 438.9 853.0 436.6 850.6 435.1C848.2 433.6 845.0 434.9 844.7 432.9Z" fill="url(#ch)"/><defs><clipPath id="pnc"><path d="M891.0 346.0C890.8 341.7 890.7 339.5 891.5 337.0C892.3 334.5 893.9 332.4 896.0 331.0C898.1 329.6 901.0 328.5 904.0 328.6C907.0 328.7 911.0 329.5 914.0 331.6C917.0 333.7 919.5 337.3 922.0 341.0C924.5 344.7 926.7 350.1 929.0 354.0C931.3 357.9 933.2 361.6 936.0 364.6C938.8 367.6 942.3 369.9 946.0 372.0C949.7 374.1 954.0 375.5 958.0 377.4C962.0 379.3 966.7 381.0 970.0 383.6C973.3 386.2 975.9 389.9 977.6 393.0C979.3 396.1 980.7 399.3 980.4 402.0C980.1 404.7 977.5 407.5 976.0 409.0C974.5 410.5 973.9 410.2 971.4 411.0C968.9 411.8 964.3 413.4 960.8 413.5C957.3 413.6 953.7 412.8 950.2 411.4C946.7 410.0 942.9 407.5 939.7 405.0C936.5 402.5 934.4 399.2 931.2 396.6C928.0 394.0 924.6 391.1 920.7 389.2C916.8 387.3 911.5 386.9 908.0 385.0C904.5 383.1 902.1 381.3 899.6 377.6C897.1 373.9 894.2 368.1 892.8 362.8C891.4 357.5 891.2 350.3 891.0 346.0Z"/></clipPath></defs><path d="M889.0 334.0C888.6 336.7 886.8 344.3 886.6 350.0C886.4 355.7 886.6 362.7 888.0 368.0C889.4 373.3 893.8 379.7 895.0 382.0" fill="none" stroke="#454545" stroke-width="7" opacity="0.7" filter="url(#b3)"/><path d="M891.0 346.0C890.8 341.7 890.7 339.5 891.5 337.0C892.3 334.5 893.9 332.4 896.0 331.0C898.1 329.6 901.0 328.5 904.0 328.6C907.0 328.7 911.0 329.5 914.0 331.6C917.0 333.7 919.5 337.3 922.0 341.0C924.5 344.7 926.7 350.1 929.0 354.0C931.3 357.9 933.2 361.6 936.0 364.6C938.8 367.6 942.3 369.9 946.0 372.0C949.7 374.1 954.0 375.5 958.0 377.4C962.0 379.3 966.7 381.0 970.0 383.6C973.3 386.2 975.9 389.9 977.6 393.0C979.3 396.1 980.7 399.3 980.4 402.0C980.1 404.7 977.5 407.5 976.0 409.0C974.5 410.5 973.9 410.2 971.4 411.0C968.9 411.8 964.3 413.4 960.8 413.5C957.3 413.6 953.7 412.8 950.2 411.4C946.7 410.0 942.9 407.5 939.7 405.0C936.5 402.5 934.4 399.2 931.2 396.6C928.0 394.0 924.6 391.1 920.7 389.2C916.8 387.3 911.5 386.9 908.0 385.0C904.5 383.1 902.1 381.3 899.6 377.6C897.1 373.9 894.2 368.1 892.8 362.8C891.4 357.5 891.2 350.3 891.0 346.0Z" fill="#4e4e4e"/><g clip-path="url(#pnc)"><path d="M891.0 358.0C891.0 356.0 890.9 349.5 891.0 346.0C891.1 342.5 890.7 339.5 891.5 337.0C892.3 334.5 893.9 332.4 896.0 331.0C898.1 329.6 901.0 328.5 904.0 328.6C907.0 328.7 911.0 329.5 914.0 331.6C917.0 333.7 920.7 339.4 922.0 341.0" fill="none" stroke="#323232" stroke-width="15" filter="url(#b2)"/><ellipse cx="907" cy="361" rx="6.5" ry="11" transform="rotate(-28 907 361)" fill="#535353" filter="url(#b15)"/><ellipse cx="926" cy="372" rx="7" ry="12" transform="rotate(-48 926 372)" fill="#585858" filter="url(#b15)"/><path d="M930.4 392 L954.4 376.6" stroke="#373737" stroke-width="5.4" filter="url(#b15)"/><ellipse cx="955" cy="396.6" rx="14" ry="8.6" transform="rotate(18 955 396.6)" fill="#575757" filter="url(#b15)"/><path d="M979.0 394.0C979.2 395.3 980.9 399.5 980.4 402.0C979.9 404.5 977.5 407.5 976.0 409.0C974.5 410.5 973.9 410.2 971.4 411.0C968.9 411.8 964.3 413.4 960.8 413.5C957.3 413.6 952.0 411.8 950.2 411.4" fill="none" stroke="#2c2c2c" stroke-width="13" filter="url(#b2)"/></g><path d="M891.1 342.0C891.1 343.3 890.8 346.5 891.1 350.0C891.4 353.5 891.4 358.2 892.8 362.8C894.2 367.4 897.1 373.9 899.6 377.6C902.1 381.3 904.5 383.1 908.0 385.0C911.5 386.9 916.8 387.3 920.7 389.2C924.6 391.1 928.0 394.0 931.2 396.6C934.4 399.2 936.5 402.5 939.7 405.0C942.9 407.5 946.7 410.0 950.2 411.4C953.7 412.8 957.7 413.5 960.8 413.5C963.9 413.5 967.6 411.9 969.0 411.6" fill="none" stroke="#222" stroke-width="1.2"/><path d="M900.0 328.6C901.0 328.4 903.9 327.5 905.9 327.6C907.9 327.7 909.9 328.1 912.0 329.0C914.1 329.9 916.3 330.4 918.6 333.2C920.9 336.0 923.5 341.7 926.0 345.9C928.5 350.1 930.3 354.7 933.3 358.6C936.3 362.5 939.7 366.3 943.9 369.1C948.1 371.9 954.1 373.4 958.7 375.5C963.3 377.6 967.9 379.0 971.4 381.8C974.9 384.6 977.9 389.0 979.8 392.3C981.7 395.6 982.5 400.1 983.0 401.6" fill="none" stroke="#7e7e7e" stroke-width="3.6" stroke-linecap="round" filter="url(#b1)"/><path d="M983.0 401.6C982.7 402.7 982.3 406.2 981.0 408.0C979.7 409.8 976.0 411.8 975.0 412.6" fill="none" stroke="#666" stroke-width="1.6" stroke-linecap="round" filter="url(#b07)"/><path d="M892.0 336.0C892.5 335.2 893.7 332.2 895.0 331.0C896.3 329.8 899.2 329.0 900.0 328.6" fill="none" stroke="#626262" stroke-width="1.6" stroke-linecap="round" filter="url(#b07)"/></g></g><g><path d="M432 486.200 L445.200 489.300" stroke="#d41414" stroke-width="3.300"/><path d="M444.400 485.400 L449 490 L443 492.600 Z" fill="#b80e0e"/><path d="M432.200 485.600 L436.400 478" stroke="#0e9a1e" stroke-width="3"/><path d="M433.400 478.400 C433.600 475.200 436.400 473.800 438.200 474.400 C440 475.200 440.400 477.600 439.400 479.600 Z" fill="#0c8a1a"/><path d="M430.700 486 L430.100 476.400" stroke="#1010d0" stroke-width="3.300"/><path d="M426.800 476.600 C426.800 473.600 428.600 472.200 430.200 472.200 C432 472.200 433.800 473.600 433.800 476.400 C432 477.800 428.600 477.800 426.800 476.600 Z" fill="#0c0cc0"/><circle cx="430.400" cy="487" r="1.700" fill="#f2f2f2" stroke="#aaa" stroke-width="0.400"/><text x="431.400" y="469.800" font-family="'Liberation Sans',sans-serif" font-size="8.8" font-style="italic" font-weight="bold" fill="#2a2af0">Z</text><text x="439.200" y="472" font-family="'Liberation Sans',sans-serif" font-size="8.8" font-style="italic" font-weight="bold" fill="#28d838">Y</text><text x="448.600" y="485.600" font-family="'Liberation Sans',sans-serif" font-size="8.8" font-style="italic" font-weight="bold" fill="#f02828">X</text></g></svg><div class="a" style="left:5.6px;top:520.2px;width:54.0px;height:17.4px;box-sizing:border-box;border:1px solid;border-color:#858585 #959595 #959595 #858585;background:#f0f0f0;"></div><div class="a" style="left:59.4px;top:520.2px;width:43.0px;height:17.4px;box-sizing:border-box;border:1px solid;border-color:#858585 #959595 #959595 #858585;background:#f0f0f0;"></div><div class="a" style="left:102.4px;top:520.2px;width:39.2px;height:17.4px;box-sizing:border-box;border:1px solid;border-color:#858585 #959595 #959595 #858585;background:#e7e7e7;"></div><div class="a" style="left:142.4px;top:520.2px;width:42.0px;height:17.4px;box-sizing:border-box;border:1px solid;border-color:#858585 #959595 #959595 #858585;background:#f0f0f0;"></div><div class="a" style="left:184.6px;top:520.2px;width:119.0px;height:17.4px;box-sizing:border-box;border:1px solid;border-color:#858585 #959595 #959595 #858585;background:#e7e7e7;"></div><div class="a" style="left:102.4px;top:520.2px;width:39.2px;height:17.4px;box-sizing:border-box;border:1px solid #8f8f8f;background:#e4e4e4;"></div><div class="a" style="left:184.6px;top:520.2px;width:119px;height:17.4px;box-sizing:border-box;border:1px solid #8f8f8f;background:#e4e4e4;"></div><svg class="a" style="left:8px;top:522px" width="14" height="14" viewBox="8 522 14 14" fill="none"><path d="M11.6 531.6c-1.4 1.2-2.6 2.6-1.4 3.6s2.6-0.4 3.8-1.6l4.8-5c1.4-1.4 2.4-3 1.2-4s-2.8 0.2-4 1.400z" stroke="#111" stroke-width="1.1"/><path d="M10 524.4l10 9.800" stroke="#e29a4a" stroke-width="0.9"/><path d="M9.6 534.4l10.6-10.400" stroke="#111" stroke-width="0.8"/></svg><div class="a t" style="left:26.6px;top:523.7px;height:12px;line-height:12px;font-size:9.5px;color:#111;">已脱机</div><div class="a t" style="left:62.4px;top:523.7px;height:12px;line-height:12px;font-size:9.5px;color:#111;">操作模式</div><div class="a t" style="left:145.4px;top:523.7px;height:12px;line-height:12px;font-size:9.5px;color:#111;">激活测头</div><div class="a t" style="left:188px;top:523.7px;height:12px;line-height:12px;font-size:10.2px;color:#111;letter-spacing:-0.36px;">PH10T A:0,B:0</div><svg class="a" style="left:100px;top:522px" width="210" height="14" viewBox="100 522 210 14" fill="none"><path d="M131.400 527.600l3.400 3.300 3.400-3.300M293.300 527.600l3.400 3.300 3.400-3.300" stroke="#3a3a3a" stroke-width="1"/></svg><div class="a" style="left:425.2px;top:521.4px;width:79px;height:15.6px;box-sizing:border-box;border:1px solid #858585;background:#f2f2f2;"></div><svg class="a" style="left:428px;top:523px" width="15" height="12" viewBox="428 523 15 12" fill="none"><path d="M430 524.600h4.400q1.400 0 1.400 1.200v6.600q0-1-1.400-1h-4.400zM441.600 524.600h-4.400q-1.400 0-1.400 1.200v6.600q0-1 1.400-1h4.400z" stroke="#222" stroke-width="0.9"/><path d="M438 528.400l1.600 1.600 1-2.600" stroke="#222" stroke-width="0.7"/></svg><div class="a t" style="left:443.8px;top:523.8px;height:12px;line-height:12px;font-size:9.5px;color:#111;">自学习已开启</div><div class="a" style="left:725.2px;top:520.2px;width:88.0px;height:17.4px;box-sizing:border-box;border:1px solid;border-color:#858585 #959595 #959595 #858585;background:#f0f0f0;"></div><svg class="a" style="left:727px;top:522px" width="14" height="14" viewBox="727 522 14 14" fill="none"><rect x="729.400" y="524" width="9" height="9.600" stroke="#111" stroke-width="1.3"/><rect x="731.600" y="526.400" width="4.600" height="4.600" stroke="#666" stroke-width="0.7" stroke-dasharray="1 0.6"/><path d="M728 522.800l12 12.600" stroke="#111" stroke-width="1.3"/></svg><div class="a t" style="left:742.6px;top:523.5px;height:12px;line-height:12px;font-size:9.42px;color:#111;">未开启安全平面</div><div class="a" style="left:827.4px;top:520.2px;width:72.8px;height:17.4px;box-sizing:border-box;border:1px solid;border-color:#858585 #959595 #959595 #858585;background:#f0f0f0;"></div><div class="a" style="left:815.4px;top:520.2px;width:13.0px;height:17.4px;box-sizing:border-box;border:1px solid;border-color:#858585 #959595 #959595 #858585;background:#f0f0f0;"></div><div class="a" style="left:827.8px;top:520.8px;width:1px;height:16.4px;background:#878787;"></div><div class="a t" style="left:815.4px;top:525.4px;width:13px;text-align:center;height:13px;line-height:13px;font-size:12px;color:#111;font-family:'Liberation Mono',monospace;font-weight:bold;">X</div><div class="a t" style="left:832.4px;top:524.1px;height:13px;line-height:13px;font-size:11.780px;color:#1e1e1e;font-family:'Liberation Mono',monospace;-webkit-text-stroke:0.35px #1e1e1e;">0.0000000</div><div class="a" style="left:914.1999999999999px;top:520.2px;width:72.8px;height:17.4px;box-sizing:border-box;border:1px solid;border-color:#858585 #959595 #959595 #858585;background:#f0f0f0;"></div><div class="a" style="left:902.1999999999999px;top:520.2px;width:13.0px;height:17.4px;box-sizing:border-box;border:1px solid;border-color:#858585 #959595 #959595 #858585;background:#f0f0f0;"></div><div class="a" style="left:914.6px;top:520.8px;width:1px;height:16.4px;background:#878787;"></div><div class="a t" style="left:902.2px;top:525.4px;width:13px;text-align:center;height:13px;line-height:13px;font-size:12px;color:#111;font-family:'Liberation Mono',monospace;font-weight:bold;">Y</div><div class="a t" style="left:919.2px;top:524.1px;height:13px;line-height:13px;font-size:11.780px;color:#1e1e1e;font-family:'Liberation Mono',monospace;-webkit-text-stroke:0.35px #1e1e1e;">0.0000000</div><div class="a" style="left:1001.0px;top:520.2px;width:72.8px;height:17.4px;box-sizing:border-box;border:1px solid;border-color:#858585 #959595 #959595 #858585;background:#f0f0f0;"></div><div class="a" style="left:989.0px;top:520.2px;width:13.0px;height:17.4px;box-sizing:border-box;border:1px solid;border-color:#858585 #959595 #959595 #858585;background:#f0f0f0;"></div><div class="a" style="left:1001.4px;top:520.8px;width:1px;height:16.4px;background:#878787;"></div><div class="a t" style="left:989.0px;top:525.4px;width:13px;text-align:center;height:13px;line-height:13px;font-size:12px;color:#111;font-family:'Liberation Mono',monospace;font-weight:bold;">Z</div><div class="a t" style="left:1006.0px;top:524.1px;height:13px;line-height:13px;font-size:11.780px;color:#1e1e1e;font-family:'Liberation Mono',monospace;-webkit-text-stroke:0.35px #1e1e1e;">0.0000000</div><div class="a" style="left:8px;top:28.4px;width:54.4px;height:17.6px;background:#9fd6d6;box-sizing:border-box;border:1px solid;border-color:#f4f4f4 #8fb8b8 #9fd6d6 #8a9a9a;"></div><div class="a t" style="left:15px;top:31.5px;height:12px;line-height:12px;font-size:9.5px;color:#123;">解决方案</div><div class="a" style="left:9px;top:45.6px;width:123.6px;height:127.2px;background:#9fd6d6;box-shadow:1px 1px 0 rgba(0,0,0,0.3),2px 2px 2.5px rgba(0,0,0,0.35);"></div><div class="a" style="left:9px;top:45.6px;width:18.8px;height:127.2px;background:#00a5a0;"></div><div class="a" style="left:9.8px;top:115.6px;width:121.8px;height:17.4px;box-sizing:border-box;border:1px solid #efd08e;border-radius:1.5px;background:linear-gradient(#fff7e4 0,#fff3d9 47%,#ffeabf 53%,#ffeeca 100%);"></div><div class="a t" style="left:36.8px;top:48.8px;height:12px;line-height:12px;font-size:9.5px;color:#23323a;">新建</div><div class="a t" style="left:36.8px;top:66.2px;height:12px;line-height:12px;font-size:9.5px;color:#23323a;">打开解决方案</div><div class="a t" style="left:36.8px;top:83.7px;height:12px;line-height:12px;font-size:9.5px;color:#23323a;">保存解决方案</div><div class="a t" style="left:36.8px;top:101.1px;height:12px;line-height:12px;font-size:9.5px;color:#23323a;">另存为...</div><div class="a t" style="left:36.8px;top:118.6px;height:12px;line-height:12px;font-size:9.5px;color:#1a1a1a;">导入CAD</div><div class="a t" style="left:36.8px;top:135.6px;height:12px;line-height:12px;font-size:9.5px;color:#23323a;">导出CAD</div><div class="a t" style="left:36.8px;top:158.4px;height:12px;line-height:12px;font-size:9.5px;color:#23323a;">最近解决方案...</div><div class="a" style="left:37px;top:152.3px;width:93px;height:1px;background:#7fa4a6;"></div><svg class="a" style="left:118px;top:120px" width="8" height="9" viewBox="0 0 8 9"><path d="M2.600 1.600 L5.800 4.400 L2.600 7.200Z" fill="#111"/></svg><div class="a" style="left:133px;top:116.2px;width:113.4px;height:105.8px;background:#9fd6d6;box-shadow:1px 1px 0 rgba(0,0,0,0.3),2px 2px 2.5px rgba(0,0,0,0.35);"></div><div class="a" style="left:133px;top:116.2px;width:19px;height:105.8px;background:#00a5a0;"></div><div class="a" style="left:134px;top:152.4px;width:111px;height:16.6px;box-sizing:border-box;border:1px solid #ecca80;border-radius:1.5px;background:linear-gradient(#fdf1d6 0,#fdefd0 46%,#fff6e2 54%,#fff3da 100%);"></div><div class="a t" style="left:161px;top:121.1px;height:12px;line-height:12px;font-size:10.3px;color:#23323a;transform:scaleX(0.856);transform-origin:0 50%;">IGES</div><div class="a t" style="left:161px;top:138.6px;height:12px;line-height:12px;font-size:10.3px;color:#23323a;transform:scaleX(0.985);transform-origin:0 50%;">NX</div><div class="a t" style="left:161px;top:156.0px;height:12px;line-height:12px;font-size:10.3px;color:#141414;transform:scaleX(0.922);transform-origin:0 50%;">CATIA V5</div><div class="a t" style="left:161px;top:173.4px;height:12px;line-height:12px;font-size:10.3px;color:#23323a;transform:scaleX(0.99);transform-origin:0 50%;">SolidWorks</div><div class="a t" style="left:161px;top:190.8px;height:12px;line-height:12px;font-size:10.3px;color:#23323a;transform:scaleX(0.922);transform-origin:0 50%;">CATIA V4</div><div class="a t" style="left:161px;top:208.2px;height:12px;line-height:12px;font-size:10.3px;color:#23323a;transform:scaleX(0.79);transform-origin:0 50%;">STEP</div>
</body></html>
